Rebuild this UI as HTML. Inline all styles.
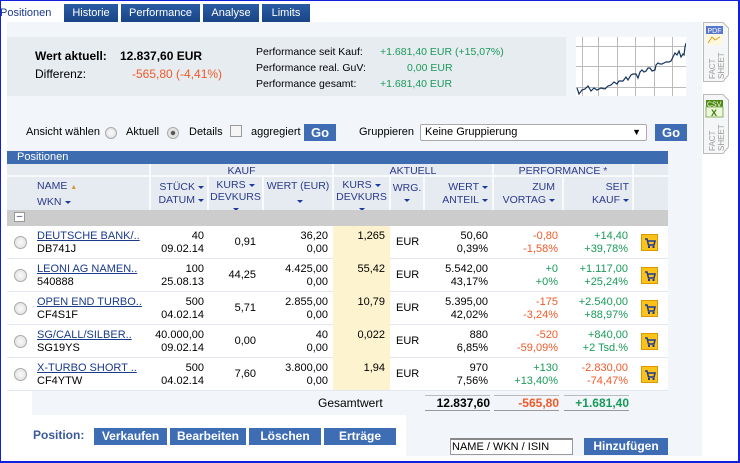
<!DOCTYPE html>
<html><head><meta charset="utf-8"><style>
*{margin:0;padding:0;box-sizing:border-box}
body{width:740px;height:463px;overflow:hidden;background:#fff;font-family:"Liberation Sans",Arial,sans-serif;font-size:11px;color:#000;position:relative}
.a{position:absolute}
.frame{left:0;top:0;width:740px;height:463px;border:1px solid #1020e0;border-width:1px 2px 2px 1px}
.tab{position:absolute;top:4px;height:18px;background:linear-gradient(#2a5ca4,#1a4586);color:#fff;font-size:11px;line-height:18px;text-align:center}
.panel{left:7px;top:22px;width:695px;height:434px;background:#f2f5fa}
.sum{left:7px;top:37px;width:559px;height:59px;background:#e7ecf1}
.g{color:#1a9a5a}.r{color:#f05a28}
.btn{position:absolute;background:#3f6db3;color:#fff;font-weight:bold;text-align:center}
.hd{color:#2a3a8a;font-size:10.5px}
.ar{display:inline-block;width:0;height:0;border-left:3px solid transparent;border-right:3px solid transparent;border-top:3px solid #1a3aa0;vertical-align:middle;margin-left:3px}
.row{position:absolute;left:7px;width:661px;height:33px;background:#fff;border-bottom:1px solid #e3e8ee}
.row div{position:absolute;font-size:11px;line-height:21px}
.rad{width:12px;height:12px;border-radius:50%;border:1px solid #aaa;background:radial-gradient(#fafafa,#ddd)}
.row .rad{width:13px;height:13px}
.row .cart{width:17px;height:17px;background:#fcc21a;border:1px solid #d89a00;line-height:0}
</style></head><body>
<div class="a panel"></div>
<div class="a" style="left:0;top:4px;width:62px;height:18px;line-height:18px;font-size:11px;color:#1a3a8a">Positionen</div>
<div class="tab" style="left:64px;width:54px">Historie</div>
<div class="tab" style="left:121px;width:79px">Performance</div>
<div class="tab" style="left:203px;width:56px">Analyse</div>
<div class="tab" style="left:262px;width:48px">Limits</div>
<div class="a sum"></div>
<div class="a" style="left:35px;top:49px;font-size:12px;font-weight:bold">Wert aktuell:</div>
<div class="a" style="left:120px;top:49px;font-size:12px;font-weight:bold">12.837,60 EUR</div>
<div class="a" style="left:35px;top:67px;font-size:12px">Differenz:</div>
<div class="a r" style="left:132px;top:67px;font-size:12px">-565,80 (-4,41%)</div>
<div class="a" style="left:256px;top:44px;font-size:10.5px;line-height:16px">Performance seit Kauf:<br>Performance real. GuV:<br>Performance gesamt:</div>
<div class="a g" style="left:380px;top:44px;font-size:10.5px;line-height:16px">+1.681,40 EUR (+15,07%)<br><span style="padding-left:27px">0,00 EUR</span><br>+1.681,40 EUR</div>
<svg class="a" style="left:576px;top:37px" width="110" height="59">
<rect width="110" height="59" fill="#fff"/>
<g stroke="#bbb" stroke-width="1"><path d="M6.5 0V59M22.5 0V59M41.5 0V59M59.5 0V59M78.5 0V59M96.5 0V59M0 9.5H110M0 29.5H110M0 50.5H110"/></g>
<polyline fill="none" stroke="#13345e" stroke-width="1.2" points="1,51 3,57 6,53 9,52 12,49 15,54 18,51 21,53 25,51 29,52 32,49 35,48 38,45 41,47 43,44 47,44 50,40 52,43 55,38 57,37 60,37 62,41 64,35 66,33 68,35 70,34 72,31 74,31 76,34 79,33 80,28 82,26 84,27 86,27 88,26 90,25 93,25 95,24 97,20 99,16 101,18 103,14 105,20 107,17 108,18 109,10 110,6"/>
</svg>
<svg class="a" style="left:703px;top:22px" width="26" height="60"><path d="M0.5 0.5H20L25.5 6V53L20 59.5H0.5Z" fill="#f4f6f8" stroke="#bbb"/><rect x="3" y="4" width="17" height="8" fill="#5577cc"/><text x="4.5" y="11" font-size="7" fill="#fff" font-family="Liberation Sans">PDF</text><rect x="4" y="12" width="15" height="11" fill="#fff8dd"/><path d="M5 21L9 15L12 18L17 15" stroke="#d9a020" fill="none"/><text transform="translate(12,57) rotate(-90)" font-size="8" fill="#999" font-family="Liberation Sans">FACT</text><text transform="translate(21,57) rotate(-90)" font-size="8" fill="#999" font-family="Liberation Sans">SHEET</text></svg>
<svg class="a" style="left:703px;top:94px" width="26" height="60"><path d="M0.5 0.5H20L25.5 6V53L20 59.5H0.5Z" fill="#f4f6f8" stroke="#bbb"/><rect x="3" y="6" width="17" height="7" fill="#4c8a10"/><text x="4" y="12.5" font-size="7" fill="#fff" font-family="Liberation Sans">CSV</text><rect x="3" y="13" width="17" height="10" fill="#eaf7d8" stroke="#8ab060"/><text x="8" y="22" font-size="9" font-weight="bold" fill="#3a7a10" font-family="Liberation Sans">X</text><text transform="translate(12,57) rotate(-90)" font-size="8" fill="#999" font-family="Liberation Sans">FACT</text><text transform="translate(21,57) rotate(-90)" font-size="8" fill="#999" font-family="Liberation Sans">SHEET</text></svg>
<div class="a" style="left:26px;top:126px;font-size:11px">Ansicht wählen</div>
<div class="a rad" style="left:105px;top:127px"></div>
<div class="a" style="left:126px;top:126px">Aktuell</div>
<div class="a rad" style="left:167px;top:127px;background:radial-gradient(#555 25%,#ddd 35%,#f5f5f5)"></div>
<div class="a" style="left:189px;top:126px">Details</div>
<div class="a" style="left:230px;top:125px;width:12px;height:12px;border:1px solid #999;background:#f5f5f5"></div>
<div class="a" style="left:251px;top:126px">aggregiert</div>
<div class="btn" style="left:304px;top:124px;width:32px;height:17px;font-size:13px;line-height:17px">Go</div>
<div class="a" style="left:359px;top:126px">Gruppieren</div>
<div class="a" style="left:420px;top:124px;width:227px;height:17px;background:#fff;border:1px solid #aaa;border-radius:2px;padding-left:4px;line-height:15px">Keine Gruppierung<span style="position:absolute;right:5px;font-size:9px">▼</span></div>
<div class="btn" style="left:655px;top:124px;width:32px;height:17px;font-size:13px;line-height:17px">Go</div>
<div class="a" style="left:7px;top:151px;width:661px;height:13px;background:#3d6cb0;color:#fff;font-size:11px;line-height:13px;padding-left:10px">Positionen</div>
<div class="a" style="left:7px;top:164px;width:661px;height:46px;background:#e6ebf1"></div>
<svg class="a" style="left:7px;top:164px" width="661" height="46"><g stroke="#fff" stroke-width="1.5"><path d="M0 12H661M143 0V46M326 0V46M486 0V46M626 0V46M201 12V46M256 12V46M383 12V46M417 12V46M556 12V46"/></g></svg>
<div class="a hd" style="left:150px;top:165px;width:183px;text-align:center">KAUF</div>
<div class="a hd" style="left:333px;top:165px;width:160px;text-align:center">AKTUELL</div>
<div class="a hd" style="left:493px;top:165px;width:140px;text-align:center">PERFORMANCE *</div>
<div class="a hd" style="left:37px;top:179px;line-height:15px">NAME <span style="color:#c8a040;font-size:7px">▲</span><br>WKN<span class="ar"></span></div>
<div class="a hd" style="left:150px;top:181px;width:54px;text-align:right;line-height:13px">STÜCK<span class="ar"></span><br>DATUM<span class="ar"></span></div>
<div class="a hd" style="left:208px;top:179px;width:55px;text-align:center;line-height:12px">KURS<span class="ar"></span><br>DEVKURS<br><span class="ar" style="margin:0"></span></div>
<div class="a hd" style="left:263px;top:179px;width:70px;text-align:center;line-height:15px">WERT (EUR)<span class="ar"></span><br>SPESEN<span class="ar"></span></div>
<div class="a hd" style="left:333px;top:179px;width:57px;text-align:center;line-height:12px">KURS<span class="ar"></span><br>DEVKURS<br><span class="ar" style="margin:0"></span></div>
<div class="a hd" style="left:390px;top:182px;width:34px;text-align:center;line-height:12px">WRG.<br><span class="ar" style="margin:0"></span></div>
<div class="a hd" style="left:424px;top:181px;width:64px;text-align:right;line-height:13px">WERT<span class="ar"></span><br>ANTEIL<span class="ar"></span></div>
<div class="a hd" style="left:493px;top:181px;width:62px;text-align:right;line-height:13px">ZUM<br>VORTAG<span class="ar"></span></div>
<div class="a hd" style="left:563px;top:181px;width:66px;text-align:right;line-height:13px">SEIT<br>KAUF<span class="ar"></span></div>
<div class="a" style="left:7px;top:210px;width:661px;height:16px;background:#cccccc"></div>
<div class="a" style="left:14px;top:212px;width:11px;height:10px;background:#fff;border:1px solid #999;font-size:10px;line-height:7px;text-align:center;color:#335">–</div>

<div class="a" style="left:333px;top:226px;width:57px;height:164px;background:#fdf3cf;z-index:1"></div>
<div class="row" style="top:226px"><div class="rad" style="left:7px;top:10px"></div><div style="left:30px;top:0;color:#1a3a8a;text-decoration:underline">DEUTSCHE BANK/..</div><div style="left:30px;top:13px">DB741J</div><div style="right:464px;top:0">40</div><div style="right:464px;top:13px">09.02.14</div><div style="right:412px;top:6px">0,91</div><div style="right:340px;top:0">36,20</div><div style="right:340px;top:13px">0,00</div><div style="right:283px;top:0;z-index:2">1,265</div><div style="left:389px;top:6px">EUR</div><div style="right:180px;top:0">50,60</div><div style="right:180px;top:13px">0,39%</div><div class="r" style="right:110px;top:0">-0,80</div><div class="r" style="right:110px;top:13px">-1,58%</div><div class="g" style="right:40px;top:0">+14,40</div><div class="g" style="right:40px;top:13px">+39,78%</div><div class="cart" style="left:634px;top:8px"><svg width="15" height="15"><path d="M3 4H5L6.5 10H12L13 6H6" fill="none" stroke="#1a3a9a" stroke-width="1.5"/><rect x="6" y="11" width="2" height="2" fill="#1a3a9a"/><rect x="10.5" y="11" width="2" height="2" fill="#1a3a9a"/></svg></div></div>
<div class="row" style="top:259px"><div class="rad" style="left:7px;top:10px"></div><div style="left:30px;top:0;color:#1a3a8a;text-decoration:underline">LEONI AG NAMEN..</div><div style="left:30px;top:13px">540888</div><div style="right:464px;top:0">100</div><div style="right:464px;top:13px">25.08.13</div><div style="right:412px;top:6px">44,25</div><div style="right:340px;top:0">4.425,00</div><div style="right:340px;top:13px">0,00</div><div style="right:283px;top:0;z-index:2">55,42</div><div style="left:389px;top:6px">EUR</div><div style="right:180px;top:0">5.542,00</div><div style="right:180px;top:13px">43,17%</div><div class="g" style="right:110px;top:0">+0</div><div class="g" style="right:110px;top:13px">+0%</div><div class="g" style="right:40px;top:0">+1.117,00</div><div class="g" style="right:40px;top:13px">+25,24%</div><div class="cart" style="left:634px;top:8px"><svg width="15" height="15"><path d="M3 4H5L6.5 10H12L13 6H6" fill="none" stroke="#1a3a9a" stroke-width="1.5"/><rect x="6" y="11" width="2" height="2" fill="#1a3a9a"/><rect x="10.5" y="11" width="2" height="2" fill="#1a3a9a"/></svg></div></div>
<div class="row" style="top:292px"><div class="rad" style="left:7px;top:10px"></div><div style="left:30px;top:0;color:#1a3a8a;text-decoration:underline">OPEN END TURBO..</div><div style="left:30px;top:13px">CF4S1F</div><div style="right:464px;top:0">500</div><div style="right:464px;top:13px">04.02.14</div><div style="right:412px;top:6px">5,71</div><div style="right:340px;top:0">2.855,00</div><div style="right:340px;top:13px">0,00</div><div style="right:283px;top:0;z-index:2">10,79</div><div style="left:389px;top:6px">EUR</div><div style="right:180px;top:0">5.395,00</div><div style="right:180px;top:13px">42,02%</div><div class="r" style="right:110px;top:0">-175</div><div class="r" style="right:110px;top:13px">-3,24%</div><div class="g" style="right:40px;top:0">+2.540,00</div><div class="g" style="right:40px;top:13px">+88,97%</div><div class="cart" style="left:634px;top:8px"><svg width="15" height="15"><path d="M3 4H5L6.5 10H12L13 6H6" fill="none" stroke="#1a3a9a" stroke-width="1.5"/><rect x="6" y="11" width="2" height="2" fill="#1a3a9a"/><rect x="10.5" y="11" width="2" height="2" fill="#1a3a9a"/></svg></div></div>
<div class="row" style="top:325px"><div class="rad" style="left:7px;top:10px"></div><div style="left:30px;top:0;color:#1a3a8a;text-decoration:underline">SG/CALL/SILBER..</div><div style="left:30px;top:13px">SG19YS</div><div style="right:464px;top:0">40.000,00</div><div style="right:464px;top:13px">09.02.14</div><div style="right:412px;top:6px">0,00</div><div style="right:340px;top:0">40</div><div style="right:340px;top:13px">0,00</div><div style="right:283px;top:0;z-index:2">0,022</div><div style="left:389px;top:6px">EUR</div><div style="right:180px;top:0">880</div><div style="right:180px;top:13px">6,85%</div><div class="r" style="right:110px;top:0">-520</div><div class="r" style="right:110px;top:13px">-59,09%</div><div class="g" style="right:40px;top:0">+840,00</div><div class="g" style="right:40px;top:13px">+2 Tsd.%</div><div class="cart" style="left:634px;top:8px"><svg width="15" height="15"><path d="M3 4H5L6.5 10H12L13 6H6" fill="none" stroke="#1a3a9a" stroke-width="1.5"/><rect x="6" y="11" width="2" height="2" fill="#1a3a9a"/><rect x="10.5" y="11" width="2" height="2" fill="#1a3a9a"/></svg></div></div>
<div class="row" style="top:358px"><div class="rad" style="left:7px;top:10px"></div><div style="left:30px;top:0;color:#1a3a8a;text-decoration:underline">X-TURBO SHORT ..</div><div style="left:30px;top:13px">CF4YTW</div><div style="right:464px;top:0">500</div><div style="right:464px;top:13px">04.02.14</div><div style="right:412px;top:6px">7,60</div><div style="right:340px;top:0">3.800,00</div><div style="right:340px;top:13px">0,00</div><div style="right:283px;top:0;z-index:2">1,94</div><div style="left:389px;top:6px">EUR</div><div style="right:180px;top:0">970</div><div style="right:180px;top:13px">7,56%</div><div class="g" style="right:110px;top:0">+130</div><div class="g" style="right:110px;top:13px">+13,40%</div><div class="r" style="right:40px;top:0">-2.830,00</div><div class="r" style="right:40px;top:13px">-74,47%</div><div class="cart" style="left:634px;top:8px"><svg width="15" height="15"><path d="M3 4H5L6.5 10H12L13 6H6" fill="none" stroke="#1a3a9a" stroke-width="1.5"/><rect x="6" y="11" width="2" height="2" fill="#1a3a9a"/><rect x="10.5" y="11" width="2" height="2" fill="#1a3a9a"/></svg></div></div>
<div class="a" style="left:7px;top:391px;width:25px;height:24px;background:#fff"></div>
<div class="a" style="left:7px;top:415px;width:399px;height:41px;background:#fff"></div>
<div class="a" style="left:318px;top:396px;font-size:12px">Gesamtwert</div>
<div class="a" style="left:425px;top:395px;width:65px;height:16px;border-bottom:1px solid #999;border-top:1px solid #bbb;text-align:right;font-weight:bold;font-size:12px">12.837,60</div>
<div class="a r" style="left:494px;top:395px;width:65px;height:16px;border-bottom:1px solid #999;border-top:1px solid #bbb;text-align:right;font-weight:bold;font-size:12px">-565,80</div>
<div class="a g" style="left:564px;top:395px;width:65px;height:16px;border-bottom:1px solid #999;border-top:1px solid #bbb;text-align:right;font-weight:bold;font-size:12px">+1.681,40</div>
<div class="a" style="left:33px;top:428px;font-weight:bold;color:#3a5a9a;font-size:12px">Position:</div>
<div class="btn" style="left:94px;top:428px;width:73px;height:17px;line-height:17px;font-size:12px">Verkaufen</div>
<div class="btn" style="left:170px;top:428px;width:76px;height:17px;line-height:17px;font-size:12px">Bearbeiten</div>
<div class="btn" style="left:249px;top:428px;width:72px;height:17px;line-height:17px;font-size:12px">Löschen</div>
<div class="btn" style="left:324px;top:428px;width:72px;height:17px;line-height:17px;font-size:12px">Erträge</div>
<div class="a" style="left:450px;top:438px;width:123px;height:17px;background:#fff;border:1px solid #999;border-top:2px solid #888;font-size:11px;line-height:14px;padding-left:1px">NAME / WKN / ISIN</div>
<div class="btn" style="left:584px;top:438px;width:84px;height:17px;line-height:17px;font-size:12px">Hinzufügen</div>
<div class="a frame"></div>
</body></html>
